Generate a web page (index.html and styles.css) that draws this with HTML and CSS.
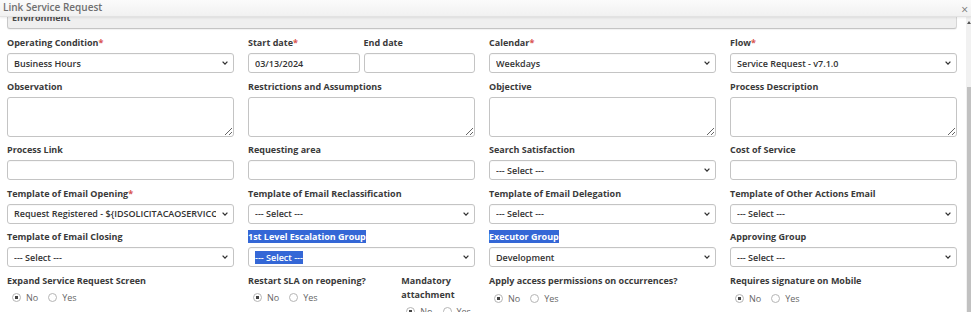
FILE: index.html
```html
<!DOCTYPE html>
<html lang="en">
<head>
  <meta charset="UTF-8">
  <title>Link Service Request</title>
  <link rel="stylesheet" href="styles.css">
</head>
<body>
  <div class="dialog">
    <!-- header -->
    <div class="dialog-head">
      <span class="dialog-title">Link Service Request</span>
      <span class="dialog-close">&times;</span>
    </div>

    <div class="dialog-body">
      <div class="form">
        <div class="env">Environment</div>

        <div class="grid">
          <!-- row 1 -->
          <div class="field">
            <label>Operating Condition<i>*</i></label>
            <div class="ctl sel"><span>Business Hours</span><svg viewBox="0 0 6 4"><path d="M0.6 0.6 L3 3.1 L5.4 0.6"/></svg></div>
          </div>
          <div class="pair">
            <div class="field">
              <label>Start date<i>*</i></label>
              <div class="ctl"><span>03/13/2024</span></div>
            </div>
            <div class="field">
              <label>End date</label>
              <div class="ctl"></div>
            </div>
          </div>
          <div class="field">
            <label>Calendar<i>*</i></label>
            <div class="ctl sel"><span>Weekdays</span><svg viewBox="0 0 6 4"><path d="M0.6 0.6 L3 3.1 L5.4 0.6"/></svg></div>
          </div>
          <div class="field">
            <label>Flow<i>*</i></label>
            <div class="ctl sel"><span>Service Request - v7.1.0</span><svg viewBox="0 0 6 4"><path d="M0.6 0.6 L3 3.1 L5.4 0.6"/></svg></div>
          </div>

          <!-- row 2 -->
          <div class="field">
            <label>Observation</label>
            <textarea class="area"></textarea>
          </div>
          <div class="field">
            <label>Restrictions and Assumptions</label>
            <textarea class="area"></textarea>
          </div>
          <div class="field">
            <label>Objective</label>
            <textarea class="area"></textarea>
          </div>
          <div class="field">
            <label>Process Description</label>
            <textarea class="area"></textarea>
          </div>

          <!-- row 3 -->
          <div class="field">
            <label>Process Link</label>
            <div class="ctl"></div>
          </div>
          <div class="field">
            <label>Requesting area</label>
            <div class="ctl"></div>
          </div>
          <div class="field">
            <label>Search Satisfaction</label>
            <div class="ctl sel"><span>--- Select ---</span><svg viewBox="0 0 6 4"><path d="M0.6 0.6 L3 3.1 L5.4 0.6"/></svg></div>
          </div>
          <div class="field">
            <label>Cost of Service</label>
            <div class="ctl"></div>
          </div>

          <!-- row 4 -->
          <div class="field">
            <label>Template of Email Opening<i>*</i></label>
            <div class="ctl sel"><span>Request Registered - ${IDSOLICITACAOSERVICO}</span><svg viewBox="0 0 6 4"><path d="M0.6 0.6 L3 3.1 L5.4 0.6"/></svg></div>
          </div>
          <div class="field">
            <label>Template of Email Reclassification</label>
            <div class="ctl sel"><span>--- Select ---</span><svg viewBox="0 0 6 4"><path d="M0.6 0.6 L3 3.1 L5.4 0.6"/></svg></div>
          </div>
          <div class="field">
            <label>Template of Email Delegation</label>
            <div class="ctl sel"><span>--- Select ---</span><svg viewBox="0 0 6 4"><path d="M0.6 0.6 L3 3.1 L5.4 0.6"/></svg></div>
          </div>
          <div class="field">
            <label>Template of Other Actions Email</label>
            <div class="ctl sel"><span>--- Select ---</span><svg viewBox="0 0 6 4"><path d="M0.6 0.6 L3 3.1 L5.4 0.6"/></svg></div>
          </div>

          <!-- row 5 -->
          <div class="field">
            <label>Template of Email Closing</label>
            <div class="ctl sel"><span>--- Select ---</span><svg viewBox="0 0 6 4"><path d="M0.6 0.6 L3 3.1 L5.4 0.6"/></svg></div>
          </div>
          <div class="field">
            <label><span class="hl">1st Level Escalation Group</span></label>
            <div class="ctl sel"><span class="hl">--- Select ---</span><svg viewBox="0 0 6 4"><path d="M0.6 0.6 L3 3.1 L5.4 0.6"/></svg></div>
          </div>
          <div class="field">
            <label><span class="hl">Executor Group</span></label>
            <div class="ctl sel"><span>Development</span><svg viewBox="0 0 6 4"><path d="M0.6 0.6 L3 3.1 L5.4 0.6"/></svg></div>
          </div>
          <div class="field">
            <label>Approving Group</label>
            <div class="ctl sel"><span>--- Select ---</span><svg viewBox="0 0 6 4"><path d="M0.6 0.6 L3 3.1 L5.4 0.6"/></svg></div>
          </div>

          <!-- row 6 -->
          <div class="field">
            <label>Expand Service Request Screen</label>
            <div class="radios">
              <label class="opt"><input type="radio" name="expand" checked> No</label>
              <label class="opt"><input type="radio" name="expand"> Yes</label>
            </div>
          </div>
          <div class="pair pair-wide">
            <div class="field">
              <label>Restart SLA on reopening?</label>
              <div class="radios">
                <label class="opt"><input type="radio" name="sla" checked> No</label>
                <label class="opt"><input type="radio" name="sla"> Yes</label>
              </div>
            </div>
            <div class="field">
              <label>Mandatory attachment</label>
              <div class="radios">
                <label class="opt"><input type="radio" name="attach" checked> No</label>
                <label class="opt"><input type="radio" name="attach"> Yes</label>
              </div>
            </div>
          </div>
          <div class="field">
            <label>Apply access permissions on occurrences?</label>
            <div class="radios low">
              <label class="opt"><input type="radio" name="perm" checked> No</label>
              <label class="opt"><input type="radio" name="perm"> Yes</label>
            </div>
          </div>
          <div class="field">
            <label>Requires signature on Mobile</label>
            <div class="radios low">
              <label class="opt"><input type="radio" name="sign" checked> No</label>
              <label class="opt"><input type="radio" name="sign"> Yes</label>
            </div>
          </div>
        </div>
      </div>

      <!-- scrollbar -->
      <div class="scroll">
        <span class="scroll-up"></span>
        <span class="scroll-thumb"></span>
      </div>
    </div>
  </div>
</body>
</html>
```

FILE: styles.css
```css
html, body {
  margin: 0;
  height: 100%;
  background: #ffffff;
  font-family: 'Open Sans', 'Liberation Sans', sans-serif;
  color: #333333;
}

.dialog {
  height: 312px;
  display: flex;
  flex-direction: column;
  overflow: hidden;
}

.dialog-head {
  height: 17px;
  flex: none;
  display: flex;
  justify-content: space-between;
  align-items: center;
  padding: 0 3px 0 3px;
  box-sizing: border-box;
  background: linear-gradient(#fbfbfb, #f1f1f1);
  border-bottom: 1px solid #e2e2e2;
  box-shadow: 0 1px 2px rgba(0, 0, 0, 0.08);
  position: relative;
  z-index: 2;
}

.dialog-title {
  font-size: 10px;
  font-weight: 600;
  color: #6f6f6f;
  margin-top: -3px;
}

.dialog-close {
  font-size: 12px;
  color: #777777;
  line-height: 1;
  margin-top: 3px;
}

.dialog-body {
  flex: 1;
  min-height: 0;
  display: flex;
}

.form {
  flex: 1;
  min-width: 0;
  overflow: hidden;
  padding: 0 9px 0 7px;
}

.env {
  margin-top: -12px;
  padding: 6px 4px 4px;
  font-size: 9px;
  line-height: 12px;
  font-weight: 700;
  color: #4a4a4a;
  background: #efefef;
  border: 1px solid #d6d6d6;
  border-bottom-color: #c4c4c4;
  border-left-color: #c8c8c8;
  border-radius: 0 0 3px 3px;
  box-shadow: 0 1px 1px rgba(0, 0, 0, 0.06);
}

.grid {
  margin-top: 7px;
  display: grid;
  grid-template-columns: repeat(4, 1fr);
  column-gap: 14px;
  row-gap: 6.5px;
}

.field {
  display: flex;
  flex-direction: column;
  min-width: 0;
}

.field > label {
  font-size: 9px;
  line-height: 14px;
  font-weight: 700;
  color: #3a3a3a;
  margin-bottom: 3px;
}

.field > label i {
  font-style: normal;
  color: #d9534f;
}

.pair {
  display: grid;
  grid-template-columns: 1fr 1fr;
  column-gap: 4px;
}

.pair-wide {
  grid-template-columns: 2fr 1fr;
  column-gap: 6px;
}

.ctl {
  height: 20px;
  box-sizing: border-box;
  border: 1px solid #c4c4c4;
  border-radius: 3px;
  background: #ffffff;
  padding: 0 5px 0 6px;
  display: flex;
  align-items: center;
  gap: 6px;
  font-size: 9px;
  font-weight: 600;
  color: #333333;
  box-shadow: inset 0 1px 1px rgba(0, 0, 0, 0.03);
}

.ctl span {
  flex: 1;
  white-space: nowrap;
  overflow: hidden;
}

.ctl span.hl {
  flex: none;
}

.ctl svg {
  width: 6px;
  height: 4px;
  flex: none;
  margin-left: auto;
}

.ctl svg path {
  fill: none;
  stroke: #333333;
  stroke-width: 1.3;
}

.area {
  height: 40px;
  box-sizing: border-box;
  border: 1px solid #c4c4c4;
  border-radius: 3px;
  margin: 0;
  padding: 3px 6px;
  font-family: inherit;
  font-size: 9px;
  resize: vertical;
}

.hl {
  background: #3467d6;
  color: #ffffff;
}

.radios {
  display: flex;
  align-items: center;
  gap: 10px;
  padding-left: 5px;
  margin-top: 1px;
}

.radios.low {
  margin-top: 2px;
}

.opt {
  display: flex;
  align-items: center;
  gap: 5px;
  font-size: 9px;
  line-height: 12px;
  color: #666666;
}

.opt input {
  appearance: none;
  -webkit-appearance: none;
  margin: 0;
  width: 9px;
  height: 9px;
  border: 1px solid #b5b5b5;
  border-radius: 50%;
  background: #ffffff;
  box-sizing: border-box;
}

.opt input:checked {
  background: radial-gradient(circle, #444444 0 1.6px, #ffffff 2px);
}

.scroll {
  width: 5px;
  flex: none;
  display: flex;
  flex-direction: column;
  align-items: center;
  background: #f1f1f1;
  padding-top: 4px;
  gap: 63px;
}

.scroll-up {
  width: 0;
  height: 0;
  border-left: 2px solid transparent;
  border-right: 2px solid transparent;
  border-bottom: 3px solid #555555;
}

.scroll-thumb {
  flex: 1;
  width: 4px;
  background: #c1c1c1;
}
```
